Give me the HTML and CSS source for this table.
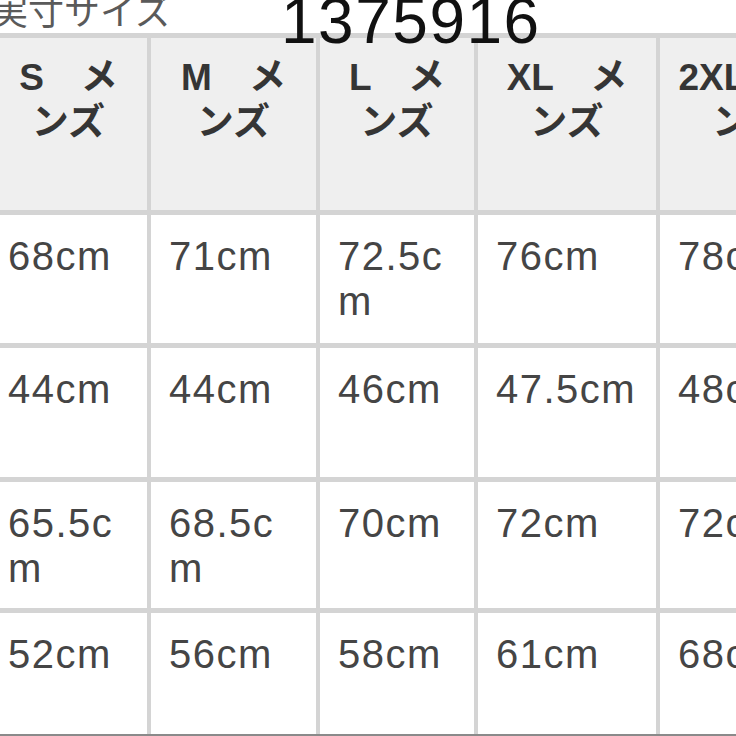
FILE: index.html
```html
<!DOCTYPE html>
<html lang="ja">
<head>
<meta charset="utf-8">
<title>実寸サイズ</title>
<link rel="stylesheet" href="styles.css">
</head>
<body>
<div class="page">
  <div class="titlebar">
    <div class="title">実寸サイズ</div>
    <div class="code">1375916</div>
  </div>
  <div class="sheet">
    <div class="cell head">S　メ<br>ンズ</div>
    <div class="cell head">M　メ<br>ンズ</div>
    <div class="cell head">L　メ<br>ンズ</div>
    <div class="cell head">XL　メ<br>ンズ</div>
    <div class="cell head">2XL　メ<br>ンズ</div>

    <div class="cell">68cm</div>
    <div class="cell">71cm</div>
    <div class="cell">72.5c<br>m</div>
    <div class="cell">76cm</div>
    <div class="cell">78cm</div>

    <div class="cell">44cm</div>
    <div class="cell">44cm</div>
    <div class="cell">46cm</div>
    <div class="cell">47.5cm</div>
    <div class="cell">48cm</div>

    <div class="cell">65.5c<br>m</div>
    <div class="cell">68.5c<br>m</div>
    <div class="cell">70cm</div>
    <div class="cell">72cm</div>
    <div class="cell">72cm</div>

    <div class="cell">52cm</div>
    <div class="cell">56cm</div>
    <div class="cell">58cm</div>
    <div class="cell">61cm</div>
    <div class="cell">68cm</div>
  </div>
</div>
</body>
</html>
```

FILE: styles.css
```css
html, body {
  margin: 0;
  padding: 0;
  background: #ffffff;
  overflow: hidden;
  width: 736px;
  height: 736px;
}

.page {
  position: relative;
  margin-left: -10px;
  width: 760px;
  font-family: "Liberation Sans", "Noto Sans CJK JP", sans-serif;
}

.titlebar {
  height: 33px;
  overflow: visible;
  display: flex;
  align-items: flex-start;
}

.title {
  margin-top: -9px;
  padding-left: 2px;
  font-family: "Noto Sans CJK JP", sans-serif;
  font-size: 36px;
  line-height: 36px;
  font-weight: 400;
  color: #5a5a5a;
  white-space: nowrap;
}

.code {
  position: absolute;
  left: 291px;
  top: -11px;
  font-family: "Liberation Sans", sans-serif;
  font-size: 64px;
  line-height: 64px;
  letter-spacing: 1.5px;
  color: #111111;
  z-index: 2;
}

.sheet {
  display: grid;
  grid-template-columns: 157px 165px 154px 178px 178px;
  grid-template-rows: 172px 128px 129px 126px 121px;
  gap: 5px 4px;
  padding-top: 5px;
  background: #d4d4d4;
  border-bottom: 2px solid #8a8a8a;
}

.cell {
  background: #ffffff;
  padding: 19px 0 0 18px;
  font-size: 40px;
  line-height: 45px;
  letter-spacing: 1.5px;
  color: #454545;
  white-space: nowrap;
}

.head {
  background: #efefef;
  padding: 17px 0 0 0;
  text-align: center;
  font-size: 37px;
  font-weight: 700;
  letter-spacing: 0;
  color: #353535;
}
```
